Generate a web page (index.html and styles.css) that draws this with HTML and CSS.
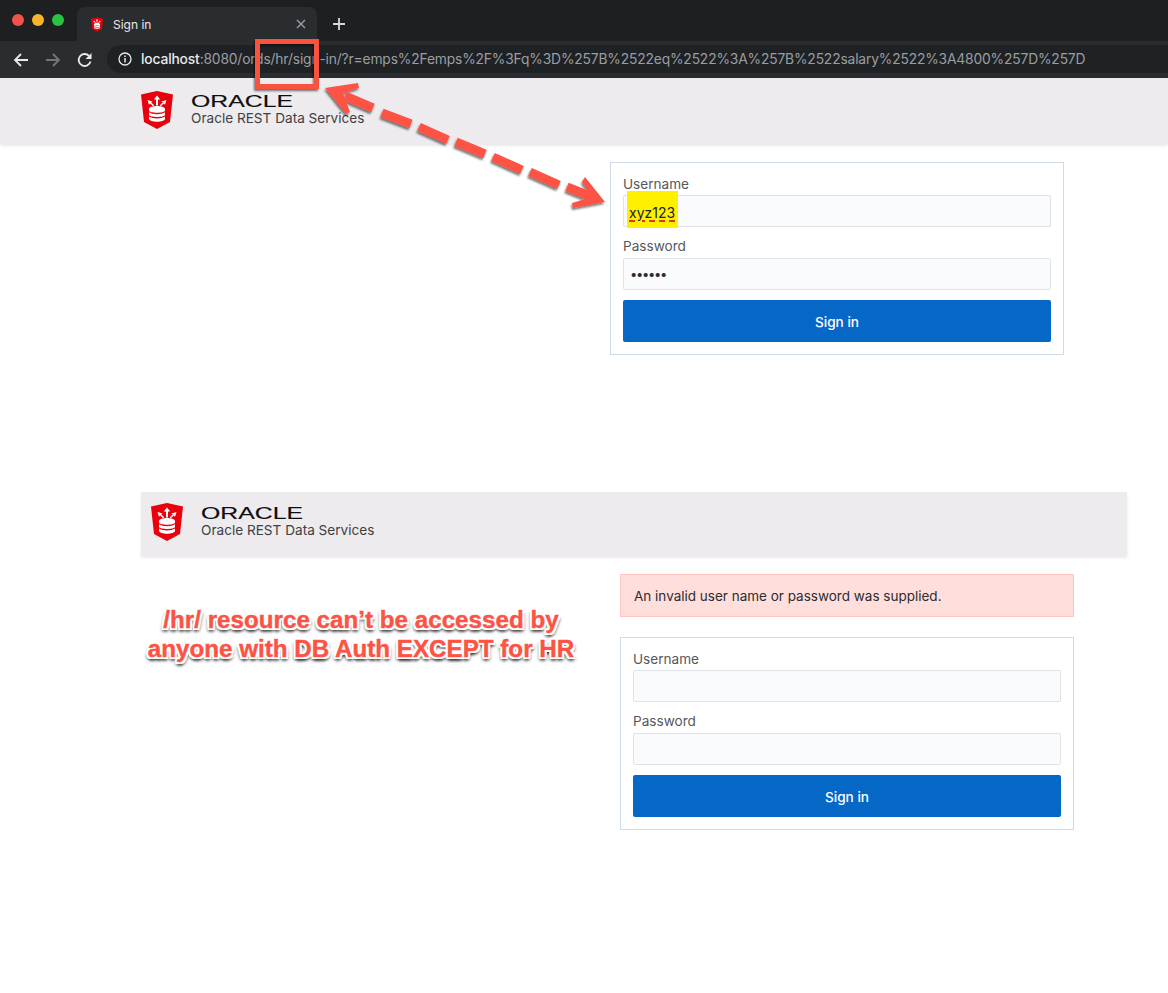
FILE: index.html
```html
<!DOCTYPE html>
<html lang="en">
<head>
<meta charset="utf-8">
<title>Sign in</title>
<link rel="stylesheet" href="styles.css">
</head>
<body>
<div class="tabstrip">
  <div class="lights"><i class="light red"></i><i class="light amber"></i><i class="light green"></i></div>
  <div class="tab">
    <svg class="favicon" width="12" height="15" viewBox="0 0 32 38"><use href="#shield"/></svg>
    <span class="tab-title">Sign in</span>
    <svg class="tab-close" width="10" height="10" viewBox="0 0 10 10"><path d="M1 1l8 8M9 1l-8 8" stroke="#9a9da1" stroke-width="1.400" fill="none"/></svg>
  </div>
  <svg class="newtab" width="14" height="14" viewBox="0 0 14 14"><path d="M7 1v12M1 7h12" stroke="#d5d7d9" stroke-width="1.800" fill="none"/></svg>
</div>
<div class="toolbar">
  <svg class="nav-icon" width="16" height="16" viewBox="0 0 16 16"><path d="M15 8H2M8 2 2 8l6 6" stroke="#e8eaed" stroke-width="1.800" fill="none"/></svg>
  <svg class="nav-icon" width="16" height="16" viewBox="0 0 16 16"><path d="M1 8h13M8 2l6 6-6 6" stroke="#74777a" stroke-width="1.800" fill="none"/></svg>
  <svg class="nav-icon" width="16" height="16" viewBox="0 0 16 16"><path d="M13.500 9.500A6 6 0 1 1 12 3.800" stroke="#e8eaed" stroke-width="1.800" fill="none"/><path d="M14.500 1v6h-6z" fill="#e8eaed"/></svg>
  <div class="omnibox">
    <svg class="info" width="14" height="14" viewBox="0 0 14 14"><circle cx="7" cy="7" r="6" stroke="#e8eaed" stroke-width="1.300" fill="none"/><path d="M7 6v4.500M7 3.500v1.400" stroke="#e8eaed" stroke-width="1.500" fill="none"/></svg>
    <span class="url"><b class="host">localhost</b>:8080/ords/hr/sign-in/?r=emps%2Femps%2F%3Fq%3D%257B%2522eq%2522%3A%257B%2522salary%2522%3A4800%257D%257D</span>
  </div>
</div>

<header class="brand brand-top">
  <svg class="shield" width="32" height="38" viewBox="0 0 32 38"><use href="#shield"/></svg>
  <div class="brand-text">
    <svg class="wordmark" width="104" height="16" viewBox="0 0 104 16"><text x="0" y="13" textLength="102" lengthAdjust="spacingAndGlyphs">ORACLE</text></svg>
    <div class="product">Oracle REST Data Services</div>
  </div>
</header>

<main class="pane-top">
  <form class="card">
    <label class="field-label">Username</label>
    <div class="input"><span class="typed">xyz123</span></div>
    <label class="field-label second">Password</label>
    <div class="input"><span class="dots">••••••</span></div>
    <div class="submit">Sign in</div>
  </form>
</main>

<section class="shot">
  <header class="brand brand-inner">
    <svg class="shield" width="32" height="38" viewBox="0 0 32 38"><use href="#shield"/></svg>
    <div class="brand-text">
      <svg class="wordmark" width="104" height="16" viewBox="0 0 104 16"><text x="0" y="13" textLength="102" lengthAdjust="spacingAndGlyphs">ORACLE</text></svg>
      <div class="product">Oracle REST Data Services</div>
    </div>
  </header>
  <div class="shot-body">
    <p class="note">/hr/ resource can’t be accessed by<br>anyone with DB Auth EXCEPT for HR</p>
    <div class="shot-form">
      <div class="alert">An invalid user name or password was supplied.</div>
      <form class="card">
        <label class="field-label">Username</label>
        <div class="input"></div>
        <label class="field-label second">Password</label>
        <div class="input"></div>
        <div class="submit">Sign in</div>
      </form>
    </div>
  </div>
</section>

<svg class="overlay" width="1168" height="993" viewBox="0 0 1168 993">
  <defs>
    <filter id="sh" x="-10%" y="-10%" width="120%" height="130%"><feDropShadow dx="-1" dy="2" stdDeviation="1.200" flood-color="#000" flood-opacity=".55"/></filter>
    <g id="shield">
      <path fill="#e8000d" d="M0 3.500 16 0l16 3.500L29 31l-13 7-13-7z"/>
      <path fill="#fff" d="M16 4.500l3.200 4h-2.200v6h-2v-6h-2.200zM6.500 9l5 1.500-1.300 1 3 2.800-1 .9-3-2.700-1.200 1.200zM25.500 9l-5 1.500 1.300 1-3 2.800 1 .9 3-2.700 1.200 1.200z"/>
      <path fill="#fff" d="M8 18c0-4 16-4 16 0v1.500c0 3-16 3-16 0zM8 21.200c3 2.600 13 2.600 16 0v2.600c0 3-16 3-16 0zM8 25.600c3 2.600 13 2.600 16 0v2.200c0 4-16 4-16 0z"/>
    </g>
  </defs>
  <rect class="callout" x="257.500" y="41.500" width="59" height="45" filter="url(#sh)"/>
  <g filter="url(#sh)">
    <path class="head" d="M325 88 358 83 359 88 343 93 350 112 346 114z"/>
    <path class="head" d="M585 177 605 202 573 208 572 203 592 197 582 182z"/>
    <path class="dashes" d="M345 96 373 108M382 113 411 124M419 127 448 140M456 142 485 154M493 157 522 170M530 172 559 185M567 187 595 198"/>
  </g>
</svg>
</body>
</html>
```
FILE: styles.css
```css
* { box-sizing: border-box; }
html, body { margin: 0; padding: 0; }
body {
  position: relative;
  width: 1168px;
  height: 993px;
  overflow: hidden;
  background: #fff;
  font-family: Inter, "Liberation Sans", sans-serif;
  color: #2b2d30;
}

.tabstrip {
  height: 41px;
  background: #1e1f21;
  display: flex;
  align-items: flex-end;
}
.lights { display: flex; gap: 8px; width: 77px; padding: 0 0 15px 12px; }
.light { display: block; width: 12px; height: 12px; border-radius: 50%; }
.red { background: #f2524c; }
.amber { background: #fbb32d; }
.green { background: #27c441; }
.tab {
  width: 240px;
  height: 34px;
  background: #2a2d30;
  border-radius: 8px 8px 0 0;
  display: flex;
  align-items: center;
  padding: 0 11px 0 14px;
}
.favicon { margin-right: 10px; }
.tab-title { flex: 1; font-size: 12px; color: #e8eaed; }
.newtab { margin: 0 0 10px 15px; }

.toolbar {
  height: 37px;
  background: #2a2d30;
  display: flex;
  align-items: center;
  padding-left: 13px;
}
.nav-icon { margin-right: 16px; flex: none; }
.nav-icon:nth-child(3) { margin-right: 14px; }
.omnibox {
  flex: 1;
  height: 28px;
  margin-top: -1px;
  background: #1f2225;
  border-radius: 14px 0 0 14px;
  display: flex;
  align-items: center;
  padding-left: 11px;
  white-space: nowrap;
}
.info { margin-right: 9px; flex: none; }
.url { font-size: 13.800px; color: #9b9ea1; letter-spacing: -0.150px; }
.host { font-weight: 500; color: #e8eaed; }

.brand {
  height: 66px;
  background: #edebee;
  box-shadow: 0 2px 3px rgba(0, 0, 0, .09);
  display: flex;
  align-items: center;
}
.brand-top { padding: 0 0 2px 141px; }
.brand-inner { height: 64px; padding: 0 0 4px 10px; }
.shield { flex: none; margin-right: 18px; }
.brand-text { display: flex; flex-direction: column; }
.wordmark { display: block; }
.wordmark text { font: 400 16px "Liberation Sans", sans-serif; fill: #0e0e0f; stroke: #0e0e0f; stroke-width: .15px; }
.product { font-size: 13.600px; line-height: 16px; color: #3f4144; }

.pane-top { padding: 18px 0 0 610px; }
.card {
  width: 454px;
  height: 193px;
  background: #fff;
  border: 1px solid #cfdbe6;
  padding: 12px;
  display: flex;
  flex-direction: column;
}
.field-label { flex: none; font-size: 13.600px; line-height: 18px; height: 20px; color: #55575a; }
.second { margin-top: 10px; height: 21px; }
.input {
  flex: none;
  height: 32px;
  background: #fafbfd;
  border: 1px solid #dfe3e8;
  border-radius: 2px;
  padding-left: 5px;
  display: flex;
  align-items: center;
  font-size: 14px;
  color: #222;
}
.typed {
  align-self: flex-start;
  height: 37px;
  margin: -5px 0 0 -2px;
  padding: 13px 3px 0 2px;
  line-height: 18px;
  background: #fff000;
  text-decoration: underline dashed #e0332a 1.500px;
  text-underline-offset: 2px;
}
.dots { font-size: 13px; letter-spacing: -1.300px; padding-left: 1px; color: #2b2d30; }
.submit {
  flex: none;
  height: 42px;
  margin-top: 10px;
  padding-top: 1px;
  background: #0567c6;
  border-radius: 2px;
  color: #fff;
  font-size: 13.600px;
  font-weight: 500;
  display: flex;
  align-items: center;
  justify-content: center;
}

.shot { margin: 137px 0 0 141px; width: 986px; }
.shot-body { display: flex; }
.note {
  width: 479px;
  margin: 0;
  padding: 49px 39px 0 0;
  text-align: center;
  font: 700 24.200px/29px "Liberation Sans", sans-serif;
  color: #fd5345;
  -webkit-text-stroke: .4px #fd5345;
  text-shadow: -2px 0 0 #fff, 2px 0 0 #fff, 0 -2px 0 #fff, 0 2px 0 #fff, -2px -2px 0 #fff, 2px -2px 0 #fff, -2px 2px 0 #fff, 2px 2px 0 #fff, -2px 3px 3px rgba(0, 0, 0, .5), 2px 3px 3px rgba(0, 0, 0, .5), 0 4px 3px rgba(0, 0, 0, .55);
}
.shot-form { width: 454px; padding-top: 18px; }
.alert {
  height: 43px;
  margin-bottom: 20px;
  background: #ffdedc;
  border: 1px solid #ffc4c0;
  font-size: 13.500px;
  padding-left: 13px;
  display: flex;
  align-items: center;
  color: #2b2d30;
}

.overlay { position: absolute; left: 0; top: 0; pointer-events: none; }
.callout { fill: none; stroke: #f95340; stroke-width: 5; }
.head { fill: #fd5345; }
.dashes { fill: none; stroke: #fd5345; stroke-width: 9; }
```
